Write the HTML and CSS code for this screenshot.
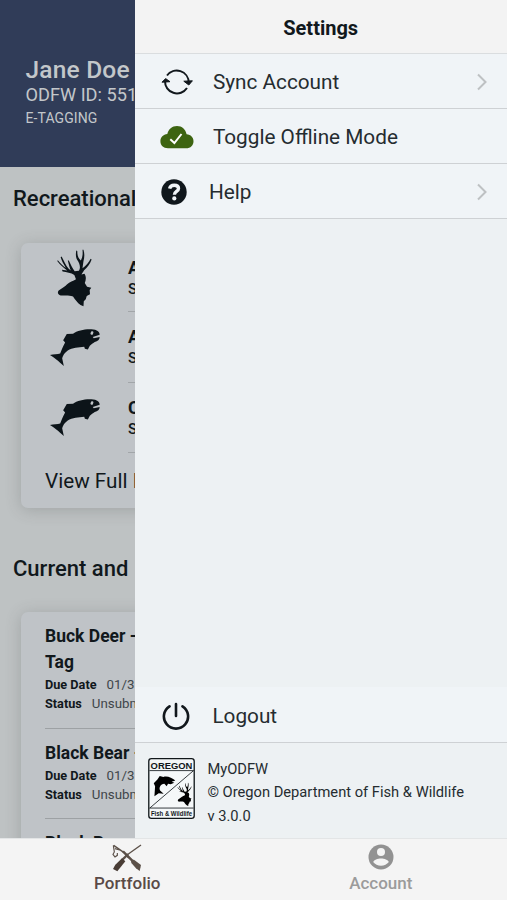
FILE: index.html
```html
<!DOCTYPE html>
<html lang="en">
<head>
<meta charset="utf-8">
<title>MyODFW</title>
<link rel="stylesheet" href="styles.css">
</head>
<body>
<svg class="defs" aria-hidden="true">
  <symbol id="deer" viewBox="45 5 115 184">
    <path d="M102 88 C92 80 78 80 66 77 L64 72 L80 74 C66 63 58 56 49 44 L52 43 C60 53 68 60 76 66 C69 53 63 44 60 33 L63 31 C70 44 76 58 84 68 L91 74 C87 64 85 54 82 43 L85 43 C91 56 97 68 103 76 L116 75 C123 64 117 51 111 42 C106 32 106 22 108 13 L111 14 C111 27 113 35 122 43 C128 32 128 21 127 10 L130 10 C134 23 133 35 130 46 C129 54 128 60 127 67 C138 60 146 50 152 38 L155 40 C150 54 142 65 132 73 C129 79 126 82 124 86 L133 84 C139 92 138 104 134 112 L141 124 L154 127 L149 134 L150 147 L140 152 L137 162 L131 168 L130 184 L121 180 C111 173 105 164 98 154 C85 149 73 151 60 151 C52 148 49 142 54 135 C63 130 73 123 80 116 C87 109 99 106 107 101 Z"/>
  </symbol>
  <symbol id="fish" viewBox="145 292 158 118">
    <path fill-rule="evenodd" d="M148 374 C159 371 171 371 179 369 C183 359 187 349 194 336 L188 329 L199 310 L218 309 C235 297 270 292 290 299 C296 302 299 306 299 312 L278 319 L281 323 L299 319 C299 327 293 332 284 334 C278 338 274 341 269 346 L263 357 L254 355 L252 349 C235 352 216 351 202 360 C193 366 187 375 185 384 L190 407 C179 398 168 386 148 374 Z M272 306 a4 4 0 1 0 7 2 a4 4 0 1 0 -7 -2Z"/>
  </symbol>
</svg>
<div class="app">
  <div class="stage">
    <main class="page">
      <header class="profile">
        <div class="name">Jane Doe</div>
        <div class="odfw-id">ODFW ID: 551</div>
        <div class="tagging">E-TAGGING</div>
      </header>
      <h2 class="section-title first">Recreational</h2>
      <section class="card licenses">
        <div class="license"><svg class="deer-icon"><use href="#deer"/></svg><div class="license-text"><b>A</b><span>S</span></div></div>
        <div class="license"><svg class="fish-icon"><use href="#fish"/></svg><div class="license-text"><b>A</b><span>S</span></div></div>
        <div class="license"><svg class="fish-icon"><use href="#fish"/></svg><div class="license-text"><b>C</b><span>S</span></div></div>
        <div class="view-full">View Full L</div>
      </section>
      <h2 class="section-title">Current and</h2>
      <section class="card tags">
        <article class="tag">
          <h3>Buck Deer -<br>Tag</h3>
          <p><b>Due Date</b><span>01/31</span></p>
          <p><b>Status</b><span>Unsubm</span></p>
        </article>
        <article class="tag">
          <h3>Black Bear -</h3>
          <p><b>Due Date</b><span>01/31</span></p>
          <p><b>Status</b><span>Unsubm</span></p>
        </article>
        <article class="tag">
          <h3>Black Bear</h3>
        </article>
      </section>
    </main>
    <aside class="drawer">
      <h1 class="drawer-title">Settings</h1>
      <div class="item">
        <svg class="icon-sync" viewBox="0 0 32 28" fill="none" stroke="#11171c" stroke-width="2"><path d="M6 7.5 A12 12 0 0 1 27.7 14.5"/><path d="M26 20 A12 12 0 0 1 4 13"/><path d="M22.8 13.2 L27.8 17 L31.4 12.8 Z M1 14.2 L4.6 10.6 L9 13.7Z" fill="#11171c" stroke-width="1" stroke-linejoin="round"/></svg>
        <span class="label">Sync Account</span>
        <svg class="chevron" viewBox="0 0 12 18"><path d="M2 1.5 L9.5 9 L2 16.5"/></svg>
      </div>
      <div class="item">
        <svg class="icon-cloud" viewBox="0 0 34 24"><path fill="#3d6411" d="M8 23.3 C3.2 23.3 .4 20.1 .4 16.3 C.4 12.3 3.3 9.5 7.3 9 C8.5 4.2 12 1 17 1 C22.1 1 25.5 4.2 26.6 9.2 C30.8 9.6 33.5 12.2 33.5 16.2 C33.5 20.3 30.7 23.3 26 23.3Z"/><path fill="none" stroke="#fff" stroke-width="2" d="M10.3 14.2 L14.4 18 L21.5 9"/></svg>
        <span class="label">Toggle Offline Mode</span>
      </div>
      <div class="item">
        <svg class="icon-help" viewBox="0 0 26 26"><circle cx="13" cy="13" r="12.7" fill="#10171c"/><path fill="none" stroke="#f0f4f7" stroke-width="3.4" d="M8.6 9.6 C9.2 6.9 11 6.2 13.2 6.2 C15.7 6.2 17.5 7.4 17.5 9.5 C17.5 12.6 13.4 12.3 13.4 15.7"/><circle cx="13.3" cy="19.4" r="2.1" fill="#f0f4f7"/></svg>
        <span class="label help">Help</span>
        <svg class="chevron" viewBox="0 0 12 18"><path d="M2 1.5 L9.5 9 L2 16.5"/></svg>
      </div>
      <div class="spacer"></div>
      <div class="item logout">
        <svg class="icon-power" viewBox="0 0 28 28" fill="none" stroke="#11171c" stroke-width="2.6" stroke-linecap="round"><path d="M14 2 V14 M7.5 4.3 A12.1 12.1 0 1 0 20.5 4.3"/></svg>
        <span class="label">Logout</span>
      </div>
      <footer class="about">
        <svg class="logo" viewBox="0 0 141 184">
          <rect x="2" y="2" width="137" height="180" rx="8" fill="#f5f8f9" stroke="#11171a" stroke-width="4"/>
          <path d="M4 38 H137 M4 151 H137 M5 151 L137 38" stroke="#11171a" stroke-width="2.5"/>
          <text class="logo-top" x="70.5" y="33" textLength="126" lengthAdjust="spacingAndGlyphs">OREGON</text>
          <path d="M19 115 L21 85 L17 76 L28 65 L35 54 L46 57 C57 53 72 59 82 68 L71 72 L79 75 L68 79 L60 78 L56 85 L49 78 C37 79 32 90 36 98 L47 108 L32 106 Z"/>
          <svg x="86" y="73" width="48" height="74" viewBox="45 5 115 184"><use href="#deer" x="45" y="5" width="115" height="184"/></svg>
          <text class="logo-bottom" x="70.5" y="174" textLength="124" lengthAdjust="spacingAndGlyphs">Fish &amp; Wildlife</text>
        </svg>
        <div class="about-text"><div>MyODFW</div><div>© Oregon Department of Fish &amp; Wildlife</div><div>v 3.0.0</div></div>
      </footer>
    </aside>
  </div>
  <nav class="tabs">
    <div class="tab active">
      <svg class="icon-gear" viewBox="0 0 90 84" fill="none" stroke="#5b5048"><path d="M87 3 L49 30" stroke-width="4"/><path d="M49 30 L29 49" stroke-width="7"/><path d="M30 43 L40 52 L16 82 L3 75 L10 62Z" fill="#493d36" stroke="none"/><path d="M5 4 L35 25 L61 50" stroke-width="4"/><path d="M33 22 L63 52" stroke-width="7"/><path d="M57 48 L66 47 L87 63 L83 81 L72 73 L58 57Z" fill="#5b5048" stroke="none"/><path d="M4 4 L7 24 L3 31 L9 39 L16 34 L16 27 M9 14 L23 18 M41 32 L50 42 M70 61 L84 71" stroke-width="3.5"/></svg>
      <span>Portfolio</span>
    </div>
    <div class="tab">
      <svg class="icon-account" viewBox="0 0 26 26"><circle cx="13" cy="13" r="12.5" fill="#929292"/><circle cx="13" cy="8.1" r="4" fill="#f4f4f4"/><path d="M5.2 18.1 C6 15.7 9.5 14.4 13 14.4 C16.5 14.4 20 15.7 20.8 18.1 C19 20.5 16.2 21.7 13 21.7 C9.8 21.7 7 20.5 5.2 18.1Z" fill="#f4f4f4"/></svg>
      <span>Account</span>
    </div>
  </nav>
</div>
</body>
</html>
```
FILE: styles.css
```css
* { box-sizing: border-box; }
body { margin: 0; font-family: Roboto, "Liberation Sans", sans-serif; color: #11181c; }
h1, h2, h3, p { margin: 0; font-weight: 500; }
svg { display: block; flex: none; }
.defs { display: none; }
.app { display: flex; flex-direction: column; width: 507px; height: 900px; overflow: hidden; }
.stage { display: grid; grid-template-columns: 135.4px 371.6px; height: 838px; flex: none; }

.page { height: 838px; overflow: hidden; white-space: nowrap; background: #bec2c3; }
.profile { height: 167px; padding: 56px 0 0 25.5px; background: #303c58; color: #c3c7ca; }
.name { font-size: 24.5px; line-height: 28px; font-weight: 500; letter-spacing: .2px; }
.odfw-id { font-size: 18.2px; line-height: 22px; }
.tagging { font-size: 14px; line-height: 18px; margin-top: 3px; letter-spacing: .1px; }
.section-title { margin: 47px 0 0 13px; font-size: 22px; line-height: 28px; }
.section-title.first { margin-top: 18px; }
.card { margin-left: 21px; width: 300px; background: #bfc3c7; border-radius: 7px; box-shadow: 0 2px 16px rgba(65, 70, 70, .24); }
.licenses { height: 265px; margin-top: 30px; }
.license { display: flex; align-items: center; height: 70.5px; padding-left: 29px; }
.license:first-child { height: 69px; }
.deer-icon, .fish-icon { fill: #0c1419; }
.deer-icon { width: 39px; height: 60px; margin-left: 5px; }
.fish-icon { width: 52px; height: 39px; margin-left: -1px; }
.license-text { display: flex; flex-direction: column; align-self: stretch; width: 150px; margin-left: 27px; padding-top: 15px; border-bottom: 1px solid #a2a6a9; }
.deer-icon + .license-text { margin-left: 34px; }
.license-text b { font-size: 18px; line-height: 20px; font-weight: 700; }
.license-text span { font-size: 15px; line-height: 22px; font-weight: 500; }
.view-full { padding: 14px 0 0 24px; font-size: 20.7px; line-height: 28px; }
.tags { height: 320px; margin-top: 29px; padding: 11px 0 0 24px; }
.tag { border-bottom: 1px solid #9da1a4; padding-bottom: 14px; margin-bottom: 11px; }
.tag h3 { font-size: 17.5px; line-height: 26px; font-weight: 700; }
.tag p { display: flex; gap: 10px; font-size: 13.3px; line-height: 19.3px; color: #40464a; font-weight: 400; }
.tag p b { font-size: 12.7px; font-weight: 700; color: #11181c; }

.drawer { display: flex; flex-direction: column; height: 838px; background: #edf1f3; }
.drawer-title { height: 54px; padding: 2px 1px 0 0; border-bottom: 1px solid #dadddf; background: #f3f3f3; font-size: 20px; font-weight: 700; line-height: 53px; text-align: center; }
.item { display: flex; align-items: center; height: 55px; padding: 2px 19px 0 25.5px; border-bottom: 1.5px solid #ced1d4; background: #f0f4f7; }
.label { flex: 1; margin-left: 20px; font-size: 20.75px; line-height: 28px; color: #252c30; }
.icon-sync { width: 32px; height: 28px; }
.icon-cloud { width: 34px; height: 24px; margin: 0 -1px; }
.icon-help { width: 26px; height: 26px; }
.label.help { margin-left: 22px; }
.icon-power { width: 28px; height: 28px; margin: 0 2px 0 1px; }
.logout .label { margin-left: 20.5px; }
.logout { height: 56px; }
.chevron { width: 12px; height: 18px; fill: none; stroke: #bec1c3; stroke-width: 2; }
.spacer { flex: 1; }
.about { display: flex; height: 95px; padding: 15px 0 0 12.5px; }
.logo { width: 47px; height: 61px; }
.logo text { font-family: "Liberation Sans", sans-serif; font-weight: 700; text-anchor: middle; fill: #11171a; }
.logo-top { font-size: 29px; }
.logo-bottom { font-size: 20px; }
.about-text { margin-left: 12.5px; font-size: 14.7px; line-height: 23.3px; color: #252c30; }

.tabs { display: grid; grid-template-columns: 1fr 1fr; height: 62px; background: #f4f4f4; border-top: 1px solid #e3e5e6; }
.tab { display: flex; flex-direction: column; align-items: center; padding: 5px 0 0 1px; font-size: 17px; line-height: 20px; font-weight: 500; color: #9b9b9b; }
.tab.active { color: #5a4a47; }
.icon-gear { width: 30px; height: 28px; }
.icon-account { width: 26px; height: 26px; margin-bottom: 2px; }
.tab span { margin-top: 1px; }
```
